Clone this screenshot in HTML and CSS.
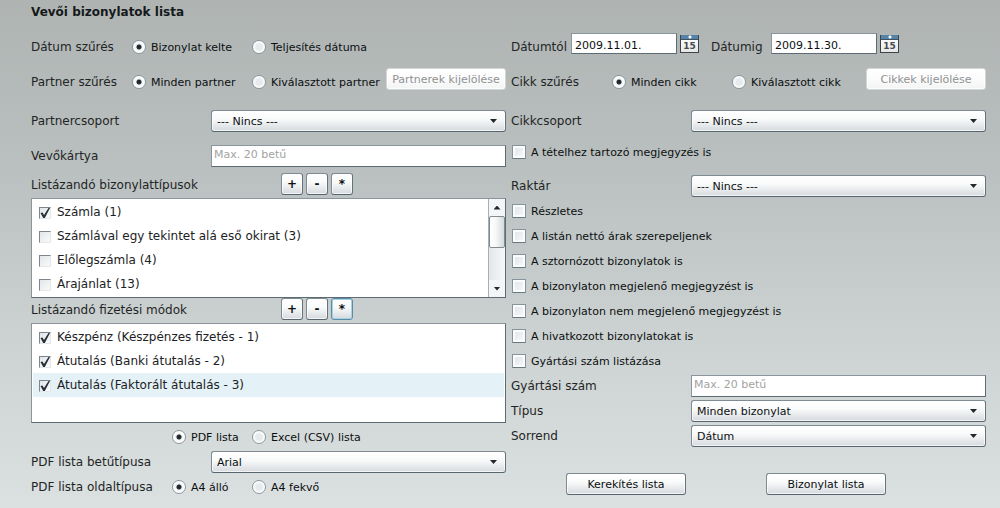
FILE: index.html
```html
<!DOCTYPE html>
<html lang="hu">
<head>
<meta charset="utf-8">
<title>Vevői bizonylatok lista</title>
<link rel="stylesheet" href="styles.css">
</head>
<body>
<form class="page">
  <h1 class="title">Vevői bizonylatok lista</h1>
  <div class="columns">
    <div class="column">
      <div class="row filter-row">
        <span class="label label-short">Dátum szűrés</span>
        <label class="option option-wide"><input class="radio" type="radio" name="date" checked>Bizonylat kelte</label>
        <label class="option"><input class="radio" type="radio" name="date">Teljesítés dátuma</label>
      </div>
      <div class="row filter-row">
        <span class="label label-short">Partner szűrés</span>
        <label class="option option-wide"><input class="radio" type="radio" name="partner" checked>Minden partner</label>
        <label class="option"><input class="radio" type="radio" name="partner">Kiválasztott partner</label>
        <button class="button pick" type="button" disabled>Partnerek kijelölése</button>
      </div>
      <div class="row group-row">
        <label class="label label-long" for="pgroup">Partnercsoport</label>
        <span class="combo"><select class="select" id="pgroup"><option>--- Nincs ---</option></select></span>
      </div>
      <div class="row card-row">
        <label class="label label-long" for="card">Vevőkártya</label>
        <input class="text" id="card" type="text" placeholder="Max. 20 betű">
      </div>
      <div class="row types-row">
        <span class="label label-list">Listázandó bizonylattípusok</span>
        <button class="button mini" type="button">+</button>
        <button class="button mini" type="button">-</button>
        <button class="button mini" type="button">*</button>
      </div>
      <div class="list">
        <div class="items">
          <label class="item"><input class="tick" type="checkbox" checked>Számla (1)</label>
          <label class="item"><input class="tick" type="checkbox">Számlával egy tekintet alá eső okirat (3)</label>
          <label class="item"><input class="tick" type="checkbox">Előlegszámla (4)</label>
          <label class="item"><input class="tick" type="checkbox">Árajánlat (13)</label>
        </div>
        <div class="scrollbar">
          <button class="scroll-arrow up" type="button" aria-label="Fel"></button>
          <div class="thumb"></div>
          <button class="scroll-arrow down" type="button" aria-label="Le"></button>
        </div>
      </div>
      <div class="row payments-row">
        <span class="label label-list">Listázandó fizetési módok</span>
        <button class="button mini" type="button">+</button>
        <button class="button mini" type="button">-</button>
        <button class="button mini focused" type="button">*</button>
      </div>
      <div class="list">
        <div class="items">
          <label class="item"><input class="tick" type="checkbox" checked>Készpénz (Készpénzes fizetés - 1)</label>
          <label class="item"><input class="tick" type="checkbox" checked>Átutalás (Banki átutalás - 2)</label>
          <label class="item selected"><input class="tick" type="checkbox" checked>Átutalás (Faktorált átutalás - 3)</label>
        </div>
      </div>
      <div class="row">
        <span class="label label-medium"></span>
        <label class="option option-narrow"><input class="radio" type="radio" name="format" checked>PDF lista</label>
        <label class="option"><input class="radio" type="radio" name="format">Excel (CSV) lista</label>
      </div>
      <div class="row">
        <label class="label label-long" for="font">PDF lista betűtípusa</label>
        <span class="combo"><select class="select" id="font"><option>Arial</option></select></span>
      </div>
      <div class="row">
        <span class="label label-medium">PDF lista oldaltípusa</span>
        <label class="option option-narrow"><input class="radio" type="radio" name="paper" checked>A4 álló</label>
        <label class="option"><input class="radio" type="radio" name="paper">A4 fekvő</label>
      </div>
    </div>

    <div class="column">
      <div class="row filter-row">
        <label class="label label-date" for="from">Dátumtól</label>
        <input class="text date" id="from" type="text" value="2009.11.01.">
        <button class="calendar" type="button" aria-label="Naptár"><span class="calendar-page">15</span></button>
        <label class="label label-date" for="to">Dátumig</label>
        <input class="text date" id="to" type="text" value="2009.11.30.">
        <button class="calendar" type="button" aria-label="Naptár"><span class="calendar-page">15</span></button>
      </div>
      <div class="row filter-row">
        <span class="label label-short">Cikk szűrés</span>
        <label class="option option-wide"><input class="radio" type="radio" name="article" checked>Minden cikk</label>
        <label class="option"><input class="radio" type="radio" name="article">Kiválasztott cikk</label>
        <button class="button pick" type="button" disabled>Cikkek kijelölése</button>
      </div>
      <div class="row group-row">
        <label class="label label-long" for="agroup">Cikkcsoport</label>
        <span class="combo"><select class="select" id="agroup"><option>--- Nincs ---</option></select></span>
      </div>
      <div class="row note-row"><label class="option"><input class="check" type="checkbox">A tételhez tartozó megjegyzés is</label></div>
      <div class="row store-row">
        <label class="label label-long" for="store">Raktár</label>
        <span class="combo"><select class="select" id="store"><option>--- Nincs ---</option></select></span>
      </div>
      <div class="row"><label class="option"><input class="check" type="checkbox">Részletes</label></div>
      <div class="row"><label class="option"><input class="check" type="checkbox">A listán nettó árak szerepeljenek</label></div>
      <div class="row"><label class="option"><input class="check" type="checkbox">A sztornózott bizonylatok is</label></div>
      <div class="row"><label class="option"><input class="check" type="checkbox">A bizonylaton megjelenő megjegyzést is</label></div>
      <div class="row"><label class="option"><input class="check" type="checkbox">A bizonylaton nem megjelenő megjegyzést is</label></div>
      <div class="row"><label class="option"><input class="check" type="checkbox">A hivatkozott bizonylatokat is</label></div>
      <div class="row"><label class="option"><input class="check" type="checkbox">Gyártási szám listázása</label></div>
      <div class="row">
        <label class="label label-long" for="serial">Gyártási szám</label>
        <input class="text" id="serial" type="text" placeholder="Max. 20 betű">
      </div>
      <div class="row">
        <label class="label label-long" for="type">Típus</label>
        <span class="combo"><select class="select" id="type"><option>Minden bizonylat</option></select></span>
      </div>
      <div class="row">
        <label class="label label-long" for="order">Sorrend</label>
        <span class="combo"><select class="select" id="order"><option>Dátum</option></select></span>
      </div>
      <div class="actions">
        <button class="button action" type="button">Kerekítés lista</button>
        <button class="button action" type="button">Bizonylat lista</button>
      </div>
    </div>
  </div>
</form>
</body>
</html>
```

FILE: styles.css
```css
* { box-sizing: border-box; }

body {
  margin: 0;
  min-height: 100vh;
  background: linear-gradient(#afb4b3, #bac0bf 33%, #ccd2d1 66%, #dbe1e0);
  font-family: "DejaVu Sans", sans-serif;
  font-size: 11px;
  color: #0b0f10;
}

button, input, select { font: inherit; color: inherit; margin: 0; }

.page { padding: 4px 14px 8px 31px; }

.title {
  margin: 0 0 13px;
  font-size: 12px;
  line-height: 16px;
  color: #15191a;
}

.columns { display: grid; grid-template-columns: 1fr 1fr; gap: 5px; }
.column { display: flex; flex-direction: column; gap: 3px; min-width: 0; }

.row { display: flex; align-items: center; min-height: 22px; white-space: nowrap; }
.filter-row { min-height: 28px; margin-bottom: 4px; }
.group-row { margin-top: 7px; }
.card-row { margin-top: 10px; }
.types-row { margin-top: 3px; }
.payments-row { margin-top: -3px; }
.note-row { margin-top: 6px; }
.store-row { margin-top: 9px; }

.label { flex: none; font-size: 12px; color: #1f2526; }
.label-short { width: 101px; }
.label-medium { width: 141px; }
.label-long { width: 180px; }
.label-list { width: 250px; padding-top: 2px; }
.label-date { width: 60px; }

.option { display: flex; align-items: center; gap: 5px; }
.option-wide { width: 120px; }
.option-narrow { width: 80px; }

.radio {
  appearance: none;
  flex: none;
  width: 14px;
  height: 14px;
  border: 1px solid #8b969c;
  border-radius: 50%;
  background: radial-gradient(circle, #e6eaec 35%, #fff 65%);
}
.radio:checked { background: radial-gradient(circle, #20292e 2px, #eceff1 3px, #fff 5px); }

.check {
  appearance: none;
  flex: none;
  width: 14px;
  height: 14px;
  margin-left: 1px;
  border: 1px solid #87939a;
  border-bottom-color: #6a7880;
  border-radius: 1px;
  background: linear-gradient(135deg, #dfe4e8, #f8f9fa);
  box-shadow: inset 0 0 0 2px #fbfcfc;
}

.text {
  flex: 1;
  min-width: 0;
  height: 22px;
  padding: 0 2px 4px;
  border: 1px solid #8a969c;
  border-right-color: #5d6c74;
  border-bottom-color: #5d6c74;
  background: #fff;
}
.text::placeholder { color: #a3a3a3; opacity: 1; }

.date { flex: 0 1 106px; height: 21px; padding: 4px 3px 0; align-self: flex-start; }

.calendar {
  flex: none;
  width: 34px;
  align-self: flex-start;
  padding: 2px 0 0 3px;
  border: 0;
  background: none;
  text-align: left;
}
.calendar-page {
  display: block;
  width: 19px;
  height: 18px;
  border: 1px solid #3d4448;
  border-top: 0;
  background: radial-gradient(circle at 9px 2px, #fff 1px, transparent 2px), linear-gradient(#5683a9 4px, #3f5261 4px, #3f5261 5px, #fafafa 5px, #e6e6e6);
  padding-top: 5px;
  font-size: 9px;
  font-weight: bold;
  line-height: 13px;
  text-align: center;
  color: #444a4d;
}

.combo { position: relative; flex: 1; min-width: 0; display: flex; }
.combo::after {
  content: "";
  position: absolute;
  right: 9px;
  top: 9px;
  width: 7px;
  height: 4px;
  background: #20282c;
  clip-path: polygon(0 0, 100% 0, 50% 100%);
  pointer-events: none;
}

.select, .button {
  border: 1px solid #7f8b92;
  border-right-color: #64727a;
  border-bottom-color: #56656e;
  border-radius: 3px;
  background: linear-gradient(#fff, #f9fafa 40%, #d6dade);
  box-shadow: inset 0 0 0 1px #ffffffb0;
}
.select { appearance: none; width: 100%; height: 22px; padding: 0 20px 0 5px; }

.button { flex: none; height: 22px; padding: 0; text-align: center; }
.button:disabled {
  border-color: #d2d6d7;
  background: linear-gradient(#fff, #fbfbfb 50%, #f3f4f4);
  color: #8f9293;
}
.pick { width: 120px; margin-left: auto; align-self: flex-start; }
.mini { width: 22px; margin-right: 3px; font-size: 12px; font-weight: bold; }
.focused { border-color: #5a8ba5; box-shadow: inset 0 0 0 1px #a5d4e6; }

.list {
  display: flex;
  min-height: 100px;
  border: 1px solid #8a969c;
  border-right-color: #5d6c74;
  border-bottom-color: #5d6c74;
  background: #fff;
}
.items { flex: 1; min-width: 0; padding: 1px; }
.item {
  display: flex;
  align-items: center;
  gap: 6px;
  height: 24px;
  padding-left: 6px;
  font-size: 12px;
  color: #1c2224;
}
.selected { background: #e4f1f6; }

.tick {
  position: relative;
  appearance: none;
  flex: none;
  width: 12px;
  height: 12px;
  margin-top: 2px;
  border: 1px solid #e3e7ea;
  border-top-color: #7d868c;
  border-left-color: #7d868c;
  background: linear-gradient(135deg, #e1e5e9, #fafbfb);
}
.tick:checked::after {
  content: "";
  position: absolute;
  inset: 0;
  background: #283037;
  clip-path: polygon(5% 50%, 25% 45%, 40% 70%, 85% 0, 100% 0, 48% 100%, 32% 100%);
}

.scrollbar {
  display: flex;
  flex-direction: column;
  width: 17px;
  border-left: 1px solid #a5afb4;
  background: linear-gradient(90deg, #e3e7ea, #f6f7f8);
}
.scroll-arrow {
  height: 17px;
  padding: 0;
  border: 0;
  background: #f3f5f6;
}
.scroll-arrow::before {
  content: "";
  display: block;
  width: 7px;
  height: 4px;
  margin: 0 auto;
  background: #20282c;
}
.up::before { clip-path: polygon(50% 0, 100% 100%, 0 100%); }
.down { margin-top: auto; }
.down::before { clip-path: polygon(0 0, 100% 0, 50% 100%); }
.thumb {
  height: 32px;
  border: 1px solid #7f8b92;
  border-radius: 2px;
  background: linear-gradient(90deg, #fff, #f7f8f8 40%, #d6dade);
}

.actions { display: flex; gap: 80px; margin-top: 23px; padding-left: 55px; }
.action { width: 120px; }
```
